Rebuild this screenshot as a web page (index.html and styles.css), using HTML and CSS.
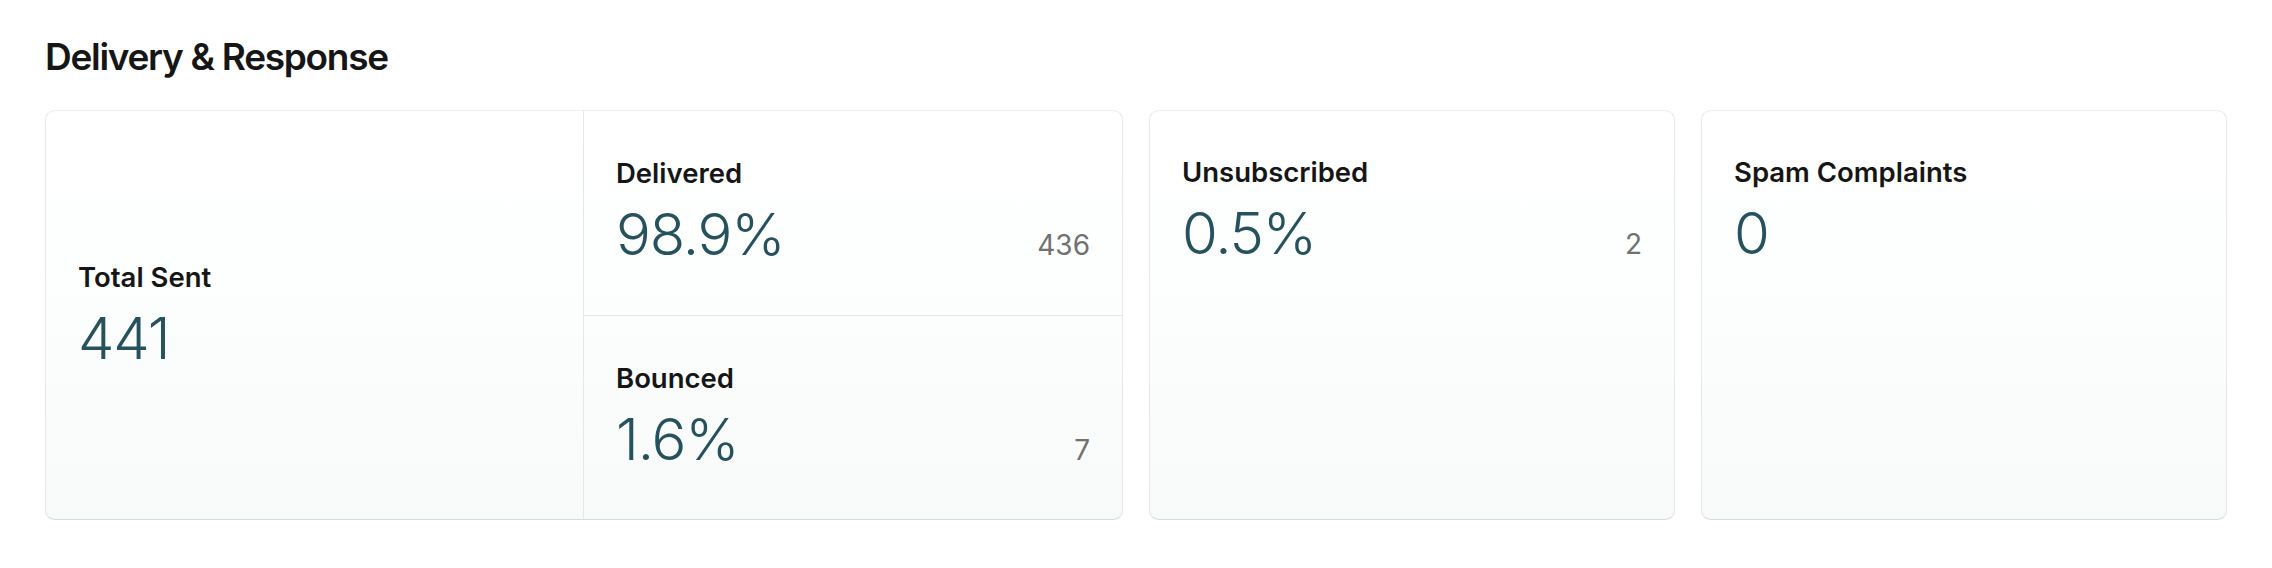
FILE: index.html
```html
<!DOCTYPE html>
<html lang="en">
<head>
  <meta charset="UTF-8">
  <meta name="viewport" content="width=device-width, initial-scale=1.0">
  <title>Delivery &amp; Response</title>
  <link rel="stylesheet" href="styles.css">
</head>
<body>
  <section class="section">
    <h2 class="section-title">Delivery &amp; Response</h2>

    <div class="stats-grid">
      <div class="card card-wide">
        <div class="cell cell-total">
          <div class="stat-label">Total Sent</div>
          <div class="stat-row">
            <span class="stat-value">441</span>
          </div>
        </div>
        <div class="split">
          <div class="cell">
            <div class="stat-label">Delivered</div>
            <div class="stat-row">
              <span class="stat-value">98.9%</span>
              <span class="stat-count">436</span>
            </div>
          </div>
          <div class="cell">
            <div class="stat-label">Bounced</div>
            <div class="stat-row">
              <span class="stat-value">1.6%</span>
              <span class="stat-count">7</span>
            </div>
          </div>
        </div>
      </div>

      <div class="card">
        <div class="cell cell-top">
          <div class="stat-label">Unsubscribed</div>
          <div class="stat-row">
            <span class="stat-value">0.5%</span>
            <span class="stat-count">2</span>
          </div>
        </div>
      </div>

      <div class="card">
        <div class="cell cell-top">
          <div class="stat-label">Spam Complaints</div>
          <div class="stat-row">
            <span class="stat-value">0</span>
          </div>
        </div>
      </div>
    </div>
  </section>
</body>
</html>
```

FILE: styles.css
```css
:root {
  --text-color: #161616;
  --value-color: #26525e;
  --muted: #717171;
  --border: #e4e8e8;
}

body {
  margin: 0;
  padding: 0;
  font-family: 'Inter', 'Noto Sans', sans-serif;
  background-color: #fff;
  color: var(--text-color);
}

.section {
  padding: 0 45px;
}

.section-title {
  margin: 0;
  padding-top: 34px;
  font-size: 37px;
  line-height: 46px;
  font-weight: 600;
  letter-spacing: -0.035em;
}

.stats-grid {
  display: grid;
  grid-template-columns: repeat(4, 1fr);
  gap: 26px;
  margin-top: 30px;
}

.card {
  border: 1px solid var(--border);
  border-top-color: #eff0f0;
  border-bottom-color: #d4dcdc;
  border-radius: 10px;
  background: linear-gradient(#fff 0%, #fdfefe 40%, #f8faf9 100%);
  box-shadow: 0 1px 2px rgba(40, 70, 70, 0.05);
  overflow: hidden;
}

.card-wide {
  grid-column: span 2;
  display: grid;
  grid-template-columns: 1fr 1fr;
  height: 410px;
  box-sizing: border-box;
}

.cell {
  display: flex;
  flex-direction: column;
  justify-content: center;
  padding: 0 32px;
}

.cell-total {
  border-right: 1px solid var(--border);
}

.split {
  display: flex;
  flex-direction: column;
}

.split .cell {
  flex: 1;
  padding-bottom: 3px;
}

.split .cell + .cell {
  border-top: 1px solid var(--border);
}

.cell-top {
  justify-content: flex-start;
  padding-top: 44px;
}

.stat-label {
  font-size: 27.5px;
  line-height: 34px;
  font-weight: 600;
}

.stat-row {
  display: flex;
  justify-content: space-between;
  align-items: baseline;
  margin-top: 12px;
}

.stat-value {
  font-size: 58px;
  line-height: 64px;
  font-weight: 300;
  color: var(--value-color);
  letter-spacing: -0.02em;
}

.stat-count {
  font-size: 28px;
  color: var(--muted);
  font-weight: 400;
}
```
